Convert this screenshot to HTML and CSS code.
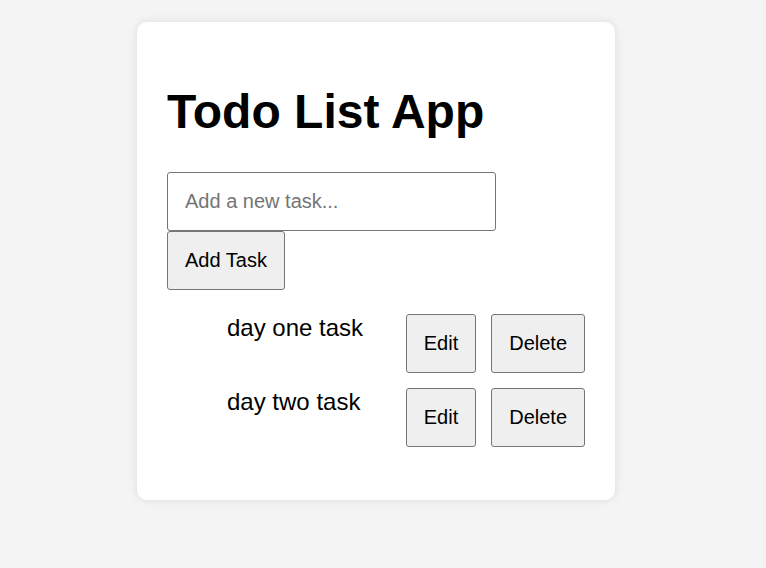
FILE: index.html
```html
<!DOCTYPE html>
<html lang="en">
<head>
<meta charset="utf-8">
<title>Todo List App</title>
<link rel="stylesheet" href="styles.css">
</head>
<body>
  <div class="card">
    <h1 class="title">Todo List App</h1>
    <div class="form">
      <input class="task-input" type="text" placeholder="Add a new task...">
      <button class="btn add-btn">Add Task</button>
    </div>
    <ul class="list">
      <li class="item">
        <span class="item-text">day one task</span>
        <div class="actions">
          <button class="btn">Edit</button>
          <button class="btn">Delete</button>
        </div>
      </li>
      <li class="item">
        <span class="item-text">day two task</span>
        <div class="actions">
          <button class="btn">Edit</button>
          <button class="btn">Delete</button>
        </div>
      </li>
    </ul>
  </div>
</body>
</html>
```
FILE: styles.css
```css
html, body {
  margin: 0;
  padding: 0;
}
body {
  background: #f4f4f4;
  font-family: "Liberation Sans", Arial, sans-serif;
  min-height: 568px;
  padding-right: 14px;
  padding-top: 22px;
  box-sizing: border-box;
}
.card {
  width: 418px;
  margin: 0 auto;
  padding: 30px;
  background: #ffffff;
  border-radius: 10px;
  box-shadow: 0 0 10px rgba(0, 0, 0, 0.1);
}
.title {
  font-size: 48px;
  font-weight: bold;
  margin: 32px 0 33px;
  color: #000;
}
.form {
  display: flex;
  flex-direction: column;
  align-items: flex-start;
}
.task-input {
  width: 70%;
  padding: 17px;
  font-size: 20px;
  font-family: "Liberation Sans", Arial, sans-serif;
  border: 1px solid #767676;
  border-radius: 3px;
  margin: 0;
  outline: none;
  color: #000;
}
.task-input::placeholder {
  color: #757575;
}
.btn {
  padding: 17px;
  font-size: 20px;
  font-family: "Liberation Sans", Arial, sans-serif;
  background: #efefef;
  border: 1px solid #767676;
  border-radius: 3px;
  color: #000;
  margin: 0;
  line-height: normal;
}
.list {
  list-style: none;
  margin: 16px 0;
  padding: 0 0 0 40px;
}
.item {
  display: flex;
  justify-content: space-between;
  align-items: flex-start;
  padding: 8px 0 7px 20px;
}
.item-text {
  font-size: 24px;
  line-height: normal;
}
.actions {
  display: flex;
  gap: 15px;
}
```
